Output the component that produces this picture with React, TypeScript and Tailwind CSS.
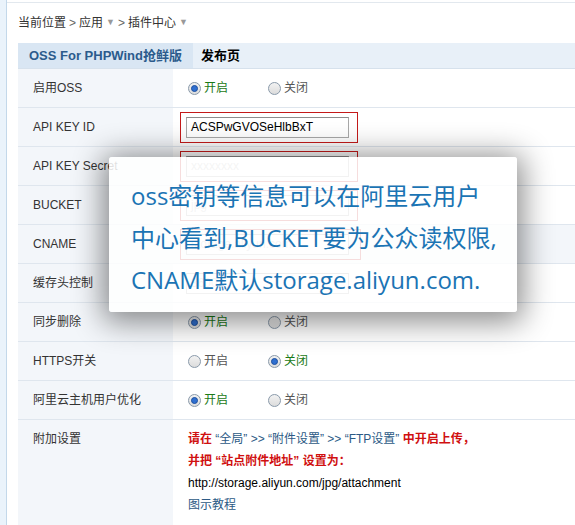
import React from 'react';

const FONT = { fontFamily: '"Liberation Sans", "Noto Sans CJK SC", sans-serif' };

function Radio({ checked, label }: { checked: boolean; label: string }) {
    return (
        <span className="flex items-center gap-[3px]">
            <span className="w-[13px] h-[13px] rounded-full border border-[#8a9aaa] bg-gradient-to-b from-[#f2f2f2] to-[#dcdcdc] flex items-center justify-center">
                {checked && <span className="w-[7px] h-[7px] rounded-full bg-[#2f6fd0] border border-[#1d4f9e]" />}
            </span>
            <span className={checked ? 'text-[#1b7a16]' : 'text-[#555]'}>{label}</span>
        </span>
    );
}

function RadioPair({ on }: { on: boolean }) {
    return (
        <div className="flex items-center text-[12px]">
            <div className="w-[80px]"><Radio checked={on} label="开启" /></div>
            <Radio checked={!on} label="关闭" />
        </div>
    );
}

function Field({ value, muted, framed = true, wide }: { value: string; muted?: boolean; framed?: boolean; wide?: boolean }) {
    return (
        <div className={`${wide ? 'w-[181px]' : 'w-[178px]'} h-[31px] ml-[-8px] flex items-center pl-[5px] border ${framed ? 'border-[#c41a1a]' : 'border-transparent'}`}>
            <div className="w-[163px] h-[21px] border border-[#a8a8a8] border-t-[#8c8c8c] bg-white flex items-center px-[4px]">
                <span className={`text-[12px] ${muted ? 'text-[#b8b8b8]' : 'text-black'}`}>{value}</span>
            </div>
        </div>
    );
}

function Row({ label, children, tint }: { label: string; children: React.ReactNode; tint?: boolean }) {
    return (
        <div className={`flex h-[39px] border-b border-[#dfe6ee] ${tint ? 'bg-[#f3f6fa]' : ''}`}>
            <div className="w-[155px] bg-[#f3f6fa] flex items-center pl-[15px] text-[12px] text-[#333]">{label}</div>
            <div className="flex-1 flex items-center pl-[15px]">{children}</div>
        </div>
    );
}

export default function App() {
    return (
        <div className="w-[575px] h-[525px] relative overflow-hidden bg-white flex" style={FONT}>
            <div className="w-[7px] bg-[#eaf3fb] border-r border-[#c3d8ea]" />
            <div className="flex-1 pl-[11px] pt-[2px]">
                <div className="border-t border-[#e2e8ee] ml-[-11px]" />
                <div className="h-[40px] flex items-center text-[12px] text-[#333] gap-[3px]">
                    <span>当前位置</span>
                    <span className="text-[#666]">&gt;</span>
                    <span>应用</span>
                    <span className="text-[#999] text-[9px]">▼</span>
                    <span className="text-[#666]">&gt;</span>
                    <span>插件中心</span>
                    <span className="text-[#999] text-[9px]">▼</span>
                </div>
                <div className="h-[26px] bg-[#e8f0f8] border-b border-[#d6e1ec] flex items-stretch">
                    <div className="w-[175px] bg-[#d9e6f3] flex items-center justify-center text-[13px] font-bold text-[#2b5b8c]">
                        OSS For PHPWind抢鲜版
                    </div>
                    <div className="flex items-center pl-[8px] text-[13px] font-bold text-black">发布页</div>
                </div>

                <Row label="启用OSS"><RadioPair on /></Row>
                <Row label="API KEY ID"><Field value="ACSPwGVOSeHlbBxT" /></Row>
                <Row label="API KEY Secret"><Field value="xxxxxxxx" muted /></Row>
                <Row label="BUCKET"><Field value="jpg" muted /></Row>
                <Row label="CNAME" tint><Field value="storage.aliyun.com" muted wide /></Row>
                <Row label="缓存头控制"><Field value="3600" muted framed={false} /></Row>
                <Row label="同步删除"><RadioPair on /></Row>
                <Row label="HTTPS开关"><RadioPair on={false} /></Row>
                <Row label="阿里云主机用户优化"><RadioPair on /></Row>

                <div className="flex h-[110px]">
                    <div className="w-[155px] bg-[#f3f6fa] pl-[15px] pt-[10px] text-[12px] text-[#333]">附加设置</div>
                    <div className="flex-1 pl-[15px] pt-[8px] text-[12px] leading-[22px]">
                        <div>
                            <span className="text-[#d01010] font-bold">请在 </span>
                            <span className="text-[#2c5a85]">“全局” &gt;&gt; “附件设置” &gt;&gt; “FTP设置” </span>
                            <span className="text-[#d01010] font-bold">中开启上传，</span>
                        </div>
                        <div className="text-[#d01010] font-bold">并把 “站点附件地址” 设置为：</div>
                        <div className="text-black">http://storage.aliyun.com/jpg/attachment</div>
                        <div className="text-[#2c5a85]">图示教程</div>
                    </div>
                </div>
            </div>

            <div
                className="absolute left-[109px] top-[157px] w-[408px] h-[155px] bg-white/85 rounded-[3px] shadow-[0_4px_30px_6px_rgba(0,0,0,0.45)] pl-[22px] pt-[18px] text-[24px] leading-[42px] text-[#1b74b4]"
                style={{ fontFamily: '"Open Sans", "Noto Sans CJK SC", sans-serif' }}
            >
                <div>oss密钥等信息可以在阿里云用户</div>
                <div>中心看到,BUCKET要为公众读权限,</div>
                <div>CNAME默认storage.aliyun.com.</div>
            </div>
        </div>
    );
}
